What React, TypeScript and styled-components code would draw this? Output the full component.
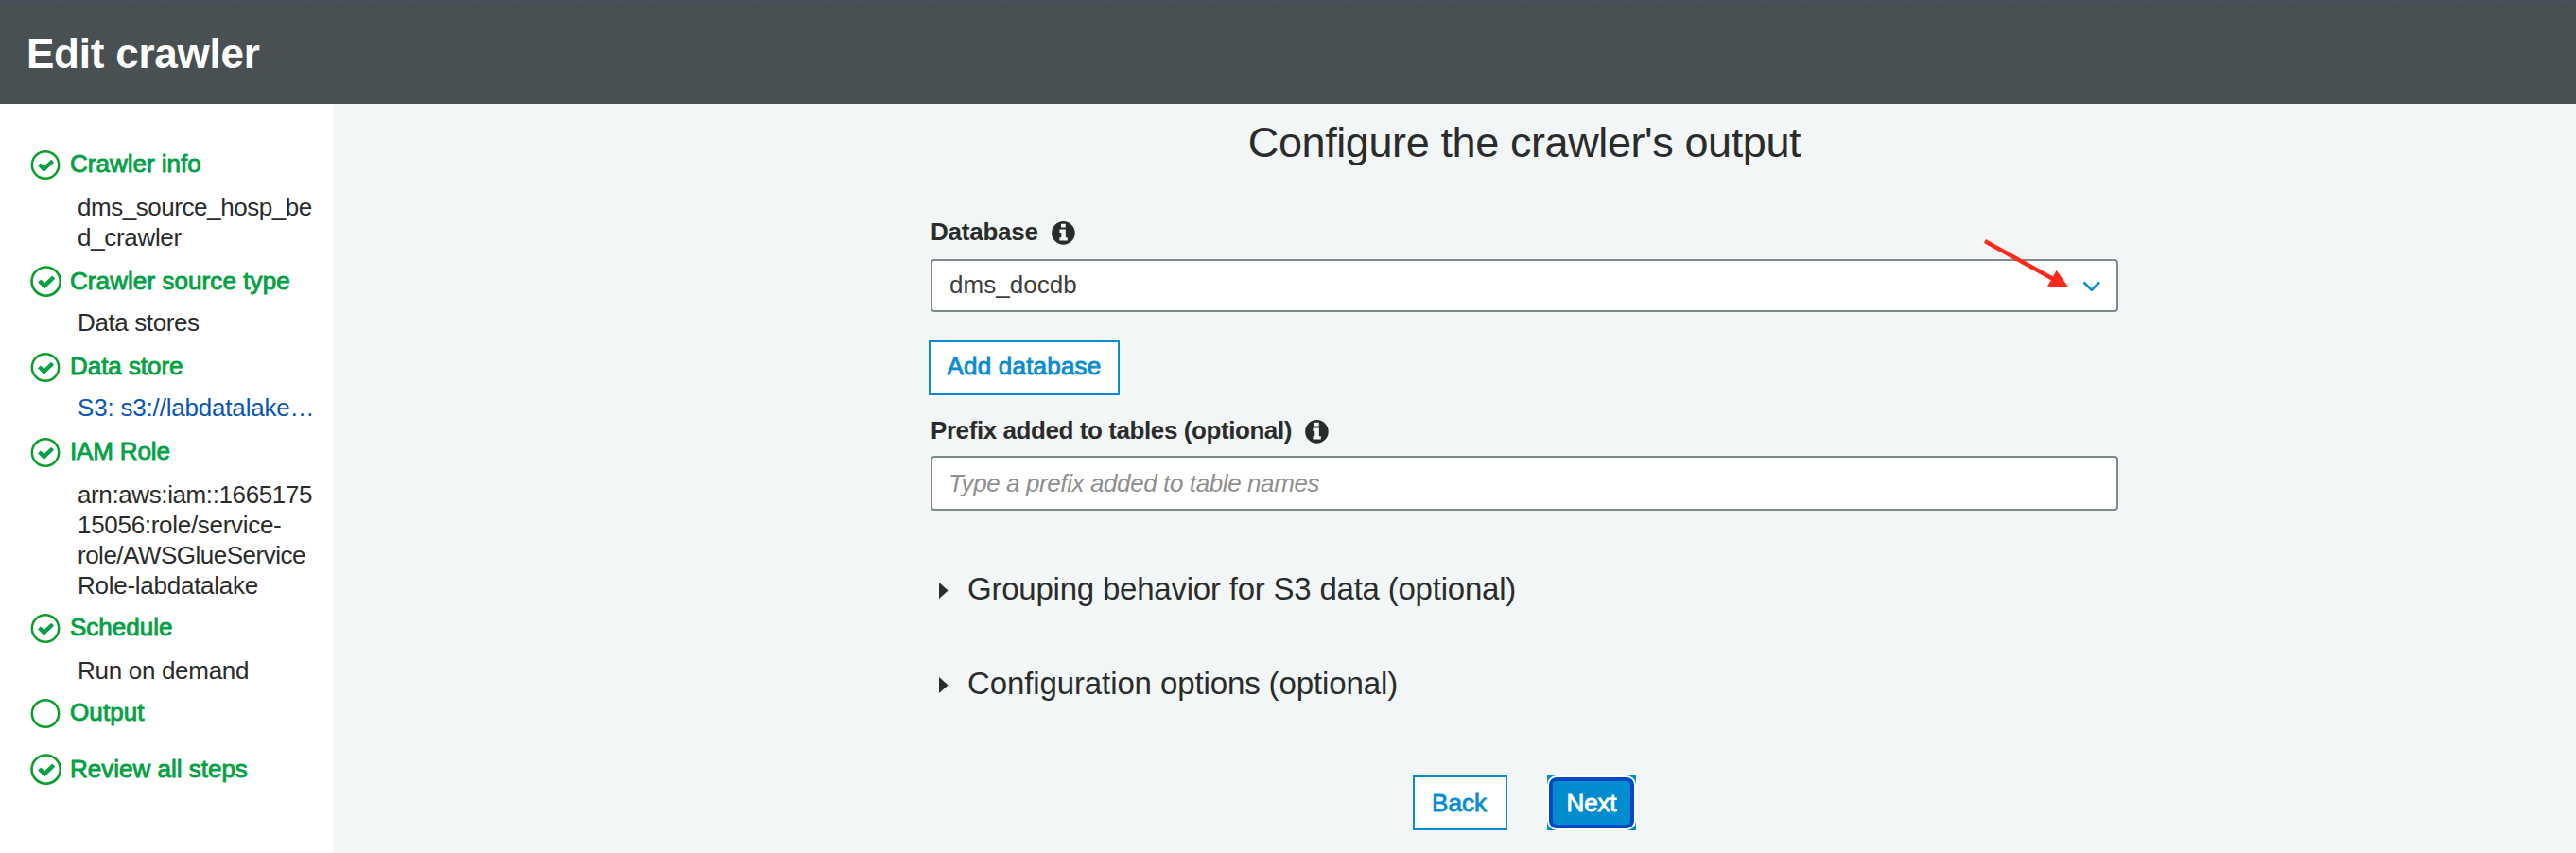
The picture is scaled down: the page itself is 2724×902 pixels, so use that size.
import React from "react";
import styled, { createGlobalStyle } from "styled-components";

const GlobalStyle = createGlobalStyle`
  * { box-sizing: border-box; }
  body { margin: 0; background: #f2f6f7; }
  body, button, input {
    font-family: "Liberation Sans", Arial, sans-serif;
    font-size: 26px;
    line-height: 32px;
    color: #2a2c2b;
  }
`;

const Page = styled.div`
  display: flex;
  flex-direction: column;
  height: 902px;
  overflow: hidden;
`;

const Header = styled.header`
  flex: none;
  height: 110px;
  padding: 31px 0 0 28px;
  background: linear-gradient(#4a5160, #485052 4px);
`;

const Title = styled.h1`
  margin: 0;
  color: #fff;
  font-size: 44px;
  line-height: 52px;
  font-weight: 700;
  letter-spacing: -0.23px;
`;

const Body = styled.div`
  display: flex;
  flex: 1;
  min-height: 0;
`;

const Sidebar = styled.nav`
  flex: none;
  width: 352px;
  padding: 47px 0 0 32px;
  background: #fff;
`;

const Step = styled.section<{ $after: number }>`
  margin-bottom: ${(p) => p.$after}px;
`;

const StepHead = styled.div`
  display: flex;
  align-items: flex-start;
  gap: 10px;
  height: 32px;
`;

const StepIcon = styled.svg<{ $drop: number }>`
  flex: none;
  display: block;
  width: 32px;
  height: 33px;
  margin-top: ${(p) => p.$drop}px;
  fill: none;
  stroke: #0a9f2c;
`;

const StepLabel = styled.span<{ $track: number }>`
  color: #06a045;
  letter-spacing: ${(p) => p.$track}px;
  -webkit-text-stroke: 0.9px #06a045;
  white-space: nowrap;
`;

const Detail = styled.div<{ $gap: number; $link?: boolean }>`
  margin: ${(p) => p.$gap}px 0 0 50px;
  color: ${(p) => (p.$link ? "#0a55b5" : "#2a2c2b")};
`;

const DetailLine = styled.div<{ $track: number }>`
  letter-spacing: ${(p) => p.$track}px;
  white-space: nowrap;
`;

const Main = styled.main`
  display: flex;
  flex: 1;
  flex-direction: column;
  align-items: center;
  padding: 15px 0 0 148px;
`;

const Heading = styled.h2`
  margin: 0 0 52px;
  font-size: 45px;
  line-height: 52px;
  font-weight: 400;
  letter-spacing: -0.4px;
`;

const Form = styled.form`
  display: flex;
  flex-direction: column;
  width: 1256px;
`;

const FieldLabel = styled.label<{ $track: number; $below: number }>`
  display: flex;
  align-items: center;
  height: 32px;
  gap: 14px;
  margin-bottom: ${(p) => p.$below}px;
  font-weight: 700;
  letter-spacing: ${(p) => p.$track}px;
`;

const InfoSvg = styled.svg`
  display: block;
  width: 25px;
  height: 25px;
  margin-top: 2px;
`;

const Select = styled.div`
  position: relative;
  display: flex;
  align-items: center;
  justify-content: space-between;
  height: 56px;
  padding: 0 16px 0 18px;
  border: 2px solid #7f8a8c;
  border-radius: 4px;
  background: #fff;
`;

const SelectValue = styled.span`
  padding-bottom: 2px;
  color: #3c3e3d;
  letter-spacing: 0.05px;
`;

const Chevron = styled.svg`
  display: block;
  width: 20px;
  height: 12px;
  margin-top: 2px;
  fill: none;
  stroke: #0a8cd2;
  stroke-width: 2.6;
`;

const PointerArrow = styled.svg`
  position: absolute;
  left: 1108px;
  top: -26px;
  width: 100px;
  height: 62px;
  overflow: visible;
`;

const TextInput = styled.input`
  height: 58px;
  padding: 0 17px;
  border: 2px solid #7f8a8c;
  border-radius: 4px;
  background: #fff;
  letter-spacing: -0.4px;
  outline: none;
  &::placeholder {
    color: #8f8f8f;
    opacity: 1;
    font-style: italic;
  }
`;

const Button = styled.button<{ $width: number; $lift?: number; $track?: number }>`
  width: ${(p) => p.$width}px;
  height: 58px;
  padding: 0 0 ${(p) => p.$lift ?? 0}px;
  border: 2px solid #0a8cd2;
  background: #fff;
  color: #0a8cd2;
  letter-spacing: ${(p) => p.$track ?? 0}px;
  -webkit-text-stroke: 0.9px #0a8cd2;
  white-space: nowrap;
`;

const AddButton = styled(Button)`
  margin: 30px 0 21px -2px;
`;

const BackButton = styled(Button)`
  padding-right: 2px;
`;

const PrimaryButton = styled.button`
  display: flex;
  width: 94px;
  height: 58px;
  padding: 0;
  border: 0;
  background: #008ccf;
  color: #fff;
  letter-spacing: -0.15px;
  -webkit-text-stroke: 0.9px #fff;
`;

const FocusRing = styled.span`
  display: flex;
  flex: 1;
  align-self: stretch;
  align-items: center;
  justify-content: center;
  border: 2px solid #fff;
  border-radius: 10px;
  box-shadow: inset 0 0 0 4px #0049c6;
`;

const Sections = styled.div`
  display: flex;
  flex-direction: column;
  gap: 60px;
  margin: 63px 0 77px;
`;

const Expander = styled.div<{ $track: number }>`
  display: flex;
  align-items: center;
  gap: 20px;
  height: 40px;
  padding-left: 9px;
  font-size: 33px;
  line-height: 40px;
  letter-spacing: ${(p) => p.$track}px;
`;

const Triangle = styled.svg`
  display: block;
  width: 10px;
  height: 17px;
  margin-top: 2px;
  fill: #2a2c2b;
`;

const Actions = styled.div`
  display: flex;
  justify-content: center;
  gap: 42px;
`;

type Mark = "check" | "large" | "empty";

function StatusIcon({ mark }: { mark: Mark }) {
  const large = mark === "large";
  return (
    <StepIcon viewBox="0 0 32 33" $drop={large ? 0 : 2}>
      <g transform={large ? "translate(-0.4 0.1) scale(1.065)" : undefined}>
        <circle cx="16" cy="15.5" r="14.2" strokeWidth="2.5" />
        {mark !== "empty" && (
          <path d="M9.5 14.9 L14.5 20 L23.6 11.2" stroke="#06a045" strokeWidth="4.2" />
        )}
      </g>
    </StepIcon>
  );
}

function InfoIcon() {
  return (
    <InfoSvg viewBox="0 0 25 25">
      <circle cx="12.4" cy="12.4" r="12.3" fill="#2a2c2b" />
      <path fill="#f2f6f7" d="M10 2.8h4.8v3.7H10zM8.4 8.6h6.5v8.7h1.9v3.3H8.4v-3.3h1.9v-5.4H8.4z" />
    </InfoSvg>
  );
}

interface StepData {
  label: string;
  track: number;
  mark: Mark;
  after: number;
  gap?: number;
  link?: boolean;
  lines?: [string, number][];
}

const steps: StepData[] = [
  {
    label: "Crawler info", track: 0, mark: "check", after: 14, gap: 14,
    lines: [["dms_source_hosp_be", -0.45], ["d_crawler", -0.32]],
  },
  { label: "Crawler source type", track: 0.08, mark: "large", after: 14, gap: 12, lines: [["Data stores", -0.39]] },
  {
    label: "Data store", track: -0.05, mark: "check", after: 14, gap: 12, link: true,
    lines: [["S3: s3://labdatalake…", -0.19]],
  },
  {
    label: "IAM Role", track: -0.15, mark: "check", after: 12, gap: 14,
    lines: [
      ["arn:aws:iam::1665175", -0.39],
      ["15056:role/service-", -0.3],
      ["role/AWSGlueService", -0.5],
      ["Role-labdatalake", -0.26],
    ],
  },
  { label: "Schedule", track: 0, mark: "check", after: 12, gap: 14, lines: [["Run on demand", -0.3]] },
  { label: "Output", track: 0.1, mark: "empty", after: 28 },
  { label: "Review all steps", track: 0, mark: "large", after: 0 },
];

export default function App() {
  return (
    <Page>
      <GlobalStyle />
      <Header>
        <Title>Edit crawler</Title>
      </Header>
      <Body>
        <Sidebar>
          {steps.map((s) => (
            <Step key={s.label} $after={s.after}>
              <StepHead>
                <StatusIcon mark={s.mark} />
                <StepLabel $track={s.track}>{s.label}</StepLabel>
              </StepHead>
              {s.lines && (
                <Detail $gap={s.gap ?? 0} $link={s.link}>
                  {s.lines.map(([text, track]) => (
                    <DetailLine key={text} $track={track}>{text}</DetailLine>
                  ))}
                </Detail>
              )}
            </Step>
          ))}
        </Sidebar>
        <Main>
          <Heading>Configure the crawler's output</Heading>
          <Form>
            <FieldLabel $track={-0.24} $below={13}>
              Database <InfoIcon />
            </FieldLabel>
            <Select>
              <SelectValue>dms_docdb</SelectValue>
              <Chevron viewBox="0 0 20 12">
                <path d="M1.5 1.5 L9.8 9.6 L18.1 1.5" />
              </Chevron>
              <PointerArrow viewBox="2094 250 100 62">
                <path d="M2099 255 L2172 295.5" stroke="#ff2a1b" strokeWidth="4.4" />
                <path d="M2187.3 303.8 L2174.7 285.8 L2165 302.8 Z" fill="#ff2a1b" />
              </PointerArrow>
            </Select>
            <AddButton type="button" $width={202} $lift={4} $track={0.2}>
              Add database
            </AddButton>
            <FieldLabel $track={-0.42} $below={11}>
              Prefix added to tables (optional) <InfoIcon />
            </FieldLabel>
            <TextInput placeholder="Type a prefix added to table names" />
            <Sections>
              <Expander $track={-0.22}>
                <Triangle viewBox="0 0 10 17"><path d="M0 0 L9.6 8.5 L0 17 Z" /></Triangle>
                Grouping behavior for S3 data (optional)
              </Expander>
              <Expander $track={-0.11}>
                <Triangle viewBox="0 0 10 17"><path d="M0 0 L9.6 8.5 L0 17 Z" /></Triangle>
                Configuration options (optional)
              </Expander>
            </Sections>
            <Actions>
              <BackButton type="button" $width={100}>Back</BackButton>
              <PrimaryButton type="button">
                <FocusRing>Next</FocusRing>
              </PrimaryButton>
            </Actions>
          </Form>
        </Main>
      </Body>
    </Page>
  );
}
